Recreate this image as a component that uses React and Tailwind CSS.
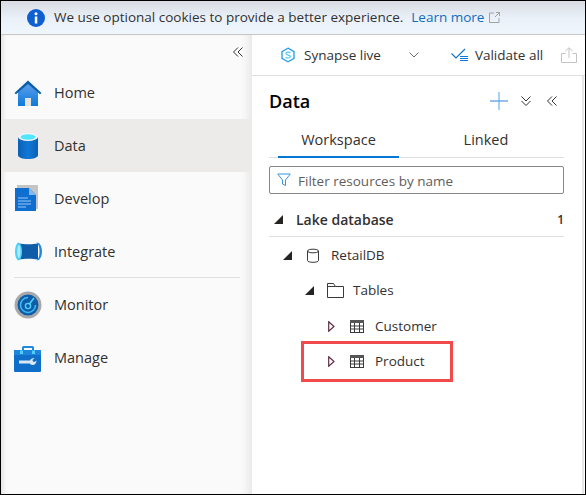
import React from 'react';

function HomeIcon() {
  return (
    <svg width="28" height="28" viewBox="0 0 28 28">
      <defs>
        <linearGradient id="homeFill" x1="0" y1="0" x2="0" y2="1">
          <stop offset="0" stopColor="#5ea0ef" />
          <stop offset="1" stopColor="#0f78d6" />
        </linearGradient>
      </defs>
      <path d="M4 13 14 4l10 9v14H4z" fill="url(#homeFill)" />
      <path d="M0.500 14 14 1.500 27.500 14l-1.500 1.200L14 5 2 15.200z" fill="#0a5da8" />
      <rect x="11" y="19" width="6" height="8" fill="#e3e3e3" />
    </svg>
  );
}

function DataIcon() {
  return (
    <svg width="20" height="26" viewBox="0 0 20 26">
      <defs>
        <linearGradient id="dataFill" x1="0" y1="0" x2="1" y2="0">
          <stop offset="0" stopColor="#0a5fb4" />
          <stop offset="0.5" stopColor="#0f78d6" />
          <stop offset="1" stopColor="#0a5fb4" />
        </linearGradient>
      </defs>
      <path d="M0 4v18c0 2.500 4.500 4 10 4s10-1.500 10-4V4z" fill="url(#dataFill)" />
      <ellipse cx="10" cy="4" rx="10" ry="4" fill="#f4f4f4" />
      <ellipse cx="10" cy="4" rx="7.500" ry="2.800" fill="#50e6ff" />
    </svg>
  );
}

function DevelopIcon() {
  return (
    <svg width="26" height="28" viewBox="0 0 26 28">
      <rect x="2" y="0" width="21" height="24" fill="#c4c4c4" />
      <path d="M0 3h14l7 7v16H0z" fill="#0f6fd0" />
      <path d="M14 3l7 7h-7z" fill="#83b9f9" />
      <path d="M3 13h10M3 16h13M3 19h13M3 22h8" stroke="#9cc9f5" strokeWidth="1" />
    </svg>
  );
}

function IntegrateIcon() {
  return (
    <svg width="27" height="19" viewBox="0 0 27 19">
      <path d="M4 1.500c5 1 14 1 19 0v16c-5-1-14-1-19 0z" fill="#0f5da8" />
      <ellipse cx="3.500" cy="9.500" rx="3.500" ry="9" fill="#50d0f8" />
      <ellipse cx="3.800" cy="9.500" rx="1.600" ry="6.500" fill="#a8ecfc" />
      <path d="M21.500 .5c2.500 2 3 5.500 3 9s-.5 7-3 9l2.500-.5c2-2 3-5 3-8.500S26 3 24 1z" fill="#1f8ae0" />
    </svg>
  );
}

function MonitorIcon() {
  return (
    <svg width="28" height="28" viewBox="0 0 28 28">
      <circle cx="14" cy="14" r="13.500" fill="#a9a9a9" />
      <circle cx="14" cy="14" r="10.500" fill="#0f5da8" />
      <path d="M14 6.500a7.500 7.500 0 1 0 7.500 7.500" fill="none" stroke="#3fb8f0" strokeWidth="1.600" />
      <circle cx="14" cy="15" r="2.600" fill="none" stroke="#50d0f8" strokeWidth="1.400" />
      <path d="M15 13.500 20 7" stroke="#50d0f8" strokeWidth="1.600" />
    </svg>
  );
}

function ManageIcon() {
  return (
    <svg width="28" height="28" viewBox="0 0 28 28">
      <path d="M8 7V3.500C8 2.500 9 2 10 2h8c1 0 2 .5 2 1.500V7h-2V4h-8v3z" fill="#1f8ae0" />
      <rect x="0" y="6" width="27" height="22" rx="1" fill="#0f6fc8" />
      <rect x="0" y="6" width="27" height="5" fill="#1f84dc" />
      <rect x="6" y="6.500" width="3" height="3.500" fill="#50d0f8" />
      <rect x="18" y="6.500" width="3" height="3.500" fill="#50d0f8" />
      <path d="M5 16.500h11c.5-1.500 2-2.500 4.500-2.500l-2 2 .5 1.500 1.500.5 2-1.500c0 2.500-1.500 4.500-4 4.500-1.500 0-2.500-1-2.500-1.500H5z" fill="#d8e8f5" />
    </svg>
  );
}

function SynapseIcon() {
  return (
    <svg width="16" height="16" viewBox="0 0 16 16" fill="none">
      <path d="M8 1.200 14 4.600v6.800L8 14.800 2 11.400V4.600z" stroke="#2f9fe8" strokeWidth="1.400" />
      <path d="M10.500 5.800C9 4.600 5.800 5 5.800 6.600c0 2.200 4.600 1 4.600 3 0 1.600-3.200 1.900-4.800.6" stroke="#50c8f5" strokeWidth="1.200" />
    </svg>
  );
}

function ValidateIcon() {
  return (
    <svg width="18" height="14" viewBox="0 0 18 14" fill="none">
      <path d="M0.500 5.500 5 10 14 1" stroke="#0f6fc8" strokeWidth="1.100" />
      <path d="M9 8.500h8M9 10.500h8M9 12.500h8" stroke="#0f78d6" strokeWidth="1" />
    </svg>
  );
}

function PublishIcon() {
  return (
    <svg width="16" height="16" viewBox="0 0 16 16" fill="none" stroke="#c3c3c3">
      <path d="M4.500 6.500H.5v9h15v-9h-4M8 11V1M4.500 4 8 .7 11.500 4" />
    </svg>
  );
}

function Chevrons({ dir = 'left' }) {
  return (
    <svg width="10" height="10" viewBox="0 0 10 10" fill="none" stroke="#323130" strokeWidth="1" className={dir === 'down' ? '-rotate-90' : ''}>
      <path d="M5 .5.5 5 5 9.500M9.500 .5 5 5l4.500 4.500" />
    </svg>
  );
}

function TableIcon() {
  return (
    <svg width="14" height="13" viewBox="0 0 14 13" fill="none">
      <rect x="0.500" y="0.500" width="13" height="12" fill="#fff" stroke="#3a3a3a" />
      <rect x="0" y="0" width="14" height="3" fill="#555" />
      <path d="M0 6h14M0 9h14M4.500 3v10M9.500 3v10" stroke="#3a3a3a" />
    </svg>
  );
}

function Expanded() {
  return (
    <svg width="9" height="9" viewBox="0 0 9 9" className="shrink-0">
      <path d="M9 0v9H0z" fill="#252423" />
    </svg>
  );
}

function Collapsed() {
  return (
    <svg width="7" height="11" viewBox="0 0 7 11" fill="none" className="shrink-0">
      <path d="M.7.800 6 5.500.7 10.200z" stroke="#5c2e46" strokeWidth="1.200" />
    </svg>
  );
}

const navItems = [
  { label: 'Home', icon: <HomeIcon /> },
  { label: 'Data', icon: <DataIcon />, active: true },
  { label: 'Develop', icon: <DevelopIcon /> },
  { label: 'Integrate', icon: <IntegrateIcon /> },
  { label: 'Monitor', icon: <MonitorIcon /> },
  { label: 'Manage', icon: <ManageIcon /> },
];

function NavRow({ item }) {
  return (
    <div className={`h-[53px] flex items-center ${item.active ? 'bg-[#edebe9]' : ''}`}>
      <div className="w-[53px] pl-[13px] shrink-0">
        <div className="w-[28px] flex justify-center">{item.icon}</div>
      </div>
      <span className="pt-[1px] text-[14.5px] text-[#323130]">{item.label}</span>
    </div>
  );
}

export default function App() {
  return (
    <div className="w-[586px] h-[495px] flex flex-col bg-white overflow-hidden border border-black font-['Open_Sans','Noto_Sans',sans-serif] text-[#323130]">
      {/* cookie banner */}
      <div className="h-[34px] shrink-0 flex items-center pl-[26px] bg-gradient-to-b from-[#d9dce2] via-[#e9f0f8] to-[#eff6fc] border-b border-[#c8c6c4] text-[13.5px]">
        <svg width="18" height="18" viewBox="0 0 18 18" className="shrink-0">
          <circle cx="9" cy="9" r="9" fill="#0f5fd0" />
          <rect x="7.800" y="7.500" width="2.500" height="7" fill="#fff" />
          <circle cx="9" cy="4.800" r="1.500" fill="#fff" />
        </svg>
        <span className="ml-[9px] whitespace-nowrap">We use optional cookies to provide a better experience.</span>
        <span className="ml-[8px] text-[#106ebe] whitespace-nowrap">Learn more</span>
        <svg width="11" height="11" viewBox="0 0 11 11" fill="none" stroke="#a3a3a3" className="ml-[5px]">
          <path d="M5 1H.5v9.500H10V6M6 5l4.500-4.500M7 .5h3.500V4" />
        </svg>
      </div>

      <div className="flex-1 flex min-h-0">
        {/* left nav */}
        <div className="w-[251px] shrink-0 bg-[#fafafa] shadow-[inset_5px_0_5px_-3px_rgba(0,0,0,0.1),inset_-10px_0_8px_-6px_rgba(0,0,0,0.08)]">
          <div className="h-[31px] flex items-end justify-end pr-[9px] pb-[9px]">
            <Chevrons />
          </div>
          <NavRow item={navItems[0]} />
          <NavRow item={navItems[1]} />
          <NavRow item={navItems[2]} />
          <NavRow item={navItems[3]} />
          <div className="h-px bg-[#e1dfdd] ml-[13px] mr-[12px] -mt-px" />
          <NavRow item={navItems[4]} />
          <NavRow item={navItems[5]} />
        </div>

        {/* right side */}
        <div className="flex-1 min-w-0 flex flex-col">
          <div className="h-[41px] shrink-0 flex items-center border-b border-[#e1dfdd] pl-[28px] text-[13.5px]">
            <SynapseIcon />
            <span className="ml-[8px]">Synapse live</span>
            <svg width="10" height="6" viewBox="0 0 10 6" fill="none" stroke="#6b6b6b" className="ml-[28px]">
              <path d="M.5.500 5 5 9.500.500" />
            </svg>
            <span className="ml-[32px]"><ValidateIcon /></span>
            <span className="ml-[6px]">Validate all</span>
            <span className="ml-[18px]"><PublishIcon /></span>
          </div>

          <div className="flex-1 min-h-0 pl-[17px] pr-[18px] mr-[1px] border-r-2 border-[#e6e6e6]">
            <div className="h-[50px] flex items-center">
              <h1 className="text-[18px] font-semibold text-black">Data</h1>
              <svg width="18" height="18" viewBox="0 0 18 18" className="ml-auto">
                <path d="M0 9h18" stroke="#2f7fd8" />
                <path d="M9 0v18" stroke="#4aa8ee" />
              </svg>
              <span className="ml-[13px]"><Chevrons dir="down" /></span>
              <span className="ml-[16px] mr-[7px]"><Chevrons /></span>
            </div>

            <div className="h-[32px] flex border-b border-[#e1dfdd] text-[14.5px]">
              <div className="w-[121px] ml-[9px] pt-[3px] text-center border-b-2 border-[#0078d4] h-[32px]">Workspace</div>
              <div className="w-[134px] ml-[20px] pt-[3px] text-center">Linked</div>
            </div>

            <div className="mt-[8px] h-[28px] flex items-center border border-[#8a8886] rounded-[2px] pl-[7px] text-[13.5px] text-[#605e5c]">
              <svg width="14" height="14" viewBox="0 0 14 14" fill="none" stroke="#3a96dd" className="shrink-0">
                <path d="M.7 1h12.600L8.500 7v5.500l-3-1.500V7z" />
              </svg>
              <span className="ml-[7px] pt-[2px]">Filter resources by name</span>
            </div>

            <div className="h-[38px] mt-[5px] pt-[4px] flex items-center border-b border-[#e1dfdd]">
              <span className="ml-[5px]"><Expanded /></span>
              <span className="ml-[13px] text-[14px] font-semibold">Lake database</span>
              <span className="ml-auto text-[12px] font-semibold">1</span>
            </div>

            <div className="h-[36px] flex items-center pl-[14px] text-[13.5px]">
              <Expanded />
              <svg width="12" height="15" viewBox="0 0 12 15" fill="none" stroke="#3a3a3a" className="ml-[15px]">
                <path d="M.5 3v9.500c0 2.400 11 2.400 11 0V3M.5 3c0 2.400 11 2.400 11 0S.5.600.5 3z" />
              </svg>
              <span className="ml-[12px]">RetailDB</span>
            </div>

            <div className="h-[35px] flex items-center pl-[36px] text-[13.5px]">
              <Expanded />
              <svg width="17" height="15" viewBox="0 0 17 15" fill="none" stroke="#3a3a3a" className="ml-[13px]">
                <path d="M.5 14.500V.5h6l2 3h8v11zM.5 3.500H8.500" />
              </svg>
              <span className="ml-[9px]">Tables</span>
            </div>

            <div className="h-[36px] flex items-center pl-[59px] text-[13.5px]">
              <Collapsed />
              <span className="ml-[15px]"><TableIcon /></span>
              <span className="ml-[11px]">Customer</span>
            </div>

            {/* red annotation box round the row */}
            <div className="h-[41px] -mt-[3px] ml-[32px] w-[152px] flex items-center border-[3px] border-[#f04a4d] pl-[24px] text-[13.5px]">
              <Collapsed />
              <span className="ml-[15px]"><TableIcon /></span>
              <span className="ml-[11px]">Product</span>
            </div>
          </div>
        </div>
      </div>
    </div>
  );
}
